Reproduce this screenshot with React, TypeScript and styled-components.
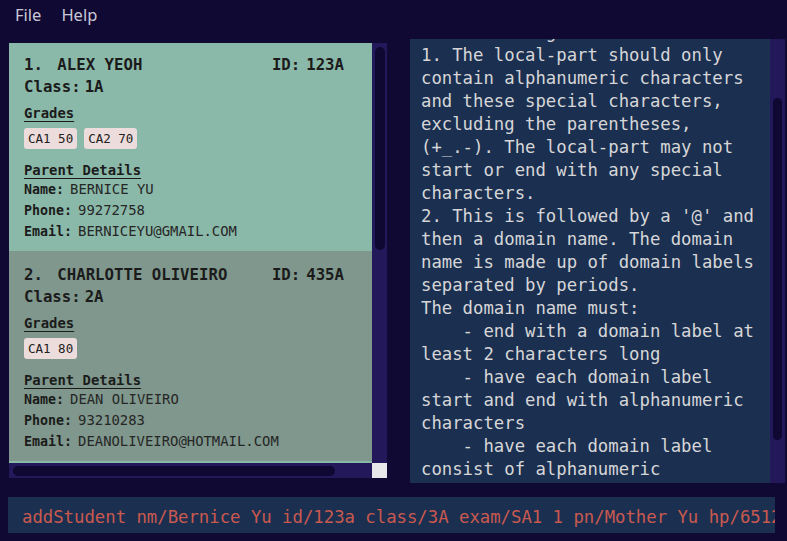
import React from "react";
import styled, { createGlobalStyle } from "styled-components";

const GlobalStyle = createGlobalStyle`
  html, body { margin: 0; padding: 0; background: #100934; }
  #root { width: 787px; height: 541px; overflow: hidden; }
  * { box-sizing: border-box; }
`;

const MONO = `"DejaVu Sans Mono", "Liberation Mono", monospace`;

const Window = styled.div`
  width: 787px;
  height: 541px;
  background: #100934;
  display: flex;
  flex-direction: column;
`;

const MenuBar = styled.div`
  height: 30px;
  display: flex;
  align-items: center;
  gap: 20px;
  padding-left: 15px;
  font-family: "Noto Sans", "Open Sans", sans-serif;
  font-size: 16.5px;
  color: #c9c8d6;
`;

const MenuItem = styled.span`
  line-height: 30px;
`;

const Main = styled.div`
  display: flex;
  padding: 9px 0 0 9px;
  gap: 23px;
`;

const LeftPane = styled.div`
  margin-top: 4px;
  width: 378px;
  display: flex;
  flex-direction: column;
`;

const ListRow = styled.div`
  display: flex;
  height: 420px;
`;

const ListViewport = styled.div`
  width: 363px;
  height: 420px;
  overflow: hidden;
`;

const ListInner = styled.div<{ $offset: number }>`
  margin-top: ${(p) => -p.$offset}px;
`;

const Card = styled.div<{ $odd: boolean }>`
  height: 210px;
  padding: 14px 28px 0 15px;
  background: ${(p) => (p.$odd ? "#8bb9a9" : "#7f978c")};
  color: #1b1b1b;
  font-family: ${MONO};
`;

const CardStub = styled.div`
  height: 10px;
  background: #8bb9a9;
`;

const HeaderRow = styled.div`
  display: flex;
  justify-content: space-between;
  font-size: 15.7px;
  font-weight: bold;
  line-height: 20px;
  height: 20px;
`;

const NameGroup = styled.div`
  display: flex;
  gap: 5px;
  white-space: pre;
`;

const FieldPair = styled.div<{ $gap: number }>`
  display: flex;
  gap: ${(p) => p.$gap}px;
  white-space: pre;
`;

const ClassRow = styled.div`
  margin-top: 2px;
  font-size: 15.7px;
  font-weight: bold;
  line-height: 20px;
  height: 20px;
`;

const SectionTitle = styled.div<{ $top: number }>`
  margin-top: ${(p) => p.$top}px;
  font-size: 13.9px;
  font-weight: bold;
  line-height: 18px;
  height: 18px;
  text-decoration: underline;
  text-underline-offset: 3px;
`;

const Chips = styled.div`
  margin-top: 6px;
  display: flex;
  gap: 7px;
  height: 21px;
`;

const Chip = styled.span`
  background: #ecdcdb;
  border-radius: 3px;
  padding: 0 4px;
  height: 21px;
  line-height: 21px;
  font-size: 12.5px;
  color: #202020;
`;

const DetailRow = styled.div`
  display: flex;
  align-items: baseline;
  gap: 6px;
  line-height: 21px;
  height: 21px;
  white-space: pre;
`;

const DetailLabel = styled.span`
  font-size: 13.3px;
  font-weight: bold;
`;

const DetailValue = styled.span`
  font-size: 13.9px;
  color: #262626;
`;

const VTrack = styled.div<{ $thumbTop: number; $inset: number }>`
  width: 15px;
  background: #23185a;
  padding-top: ${(p) => p.$thumbTop}px;
  padding-left: ${(p) => p.$inset}px;
  flex-shrink: 0;
`;

const VThumb = styled.div<{ $h: number; $w: number }>`
  width: ${(p) => p.$w}px;
  height: ${(p) => p.$h}px;
  border-radius: 5px;
  background: #0f0832;
`;

const HBarRow = styled.div`
  display: flex;
  height: 15px;
`;

const HTrack = styled.div`
  width: 363px;
  background: #23185a;
  padding: 3px 0 0 4px;
`;

const HThumb = styled.div<{ $w: number }>`
  width: ${(p) => p.$w}px;
  height: 10px;
  border-radius: 5px;
  background: #0f0832;
`;

const Corner = styled.div`
  width: 15px;
  background: #e8e7ea;
`;

const RightPane = styled.div`
  width: 375px;
  height: 444px;
  display: flex;
`;

const ResultBox = styled.div`
  width: 360px;
  height: 444px;
  background: #1b3050;
  overflow: hidden;
  padding-left: 11px;
`;

const ResultText = styled.div`
  margin-top: -18px;
  font-family: ${MONO};
  font-size: 17.3px;
  line-height: 23px;
  color: #d6d6d8;
  white-space: pre;
`;

const CommandBox = styled.div`
  margin: 14px 12px 0 8px;
  height: 36px;
  background: #1b3050;
  overflow: hidden;
  padding: 3px 0 0 14px;
  display: flex;
  align-items: center;
  font-family: ${MONO};
  font-size: 17.3px;
  color: #c9594f;
  white-space: pre;
`;

type Student = {
  idx: number;
  name: string;
  id: string;
  cls: string;
  grades: string[];
  parent: string;
  phone: string;
  email: string;
};

const students: Student[] = [
  {
    idx: 1,
    name: "ALEX YEOH",
    id: "123A",
    cls: "1A",
    grades: ["CA1 50", "CA2 70"],
    parent: "BERNICE YU",
    phone: "99272758",
    email: "BERNICEYU@GMAIL.COM",
  },
  {
    idx: 2,
    name: "CHARLOTTE OLIVEIRO",
    id: "435A",
    cls: "2A",
    grades: ["CA1 80"],
    parent: "DEAN OLIVEIRO",
    phone: "93210283",
    email: "DEANOLIVEIRO@HOTMAIL.COM",
  },
];

const resultLines = [
  "the following constraints:",
  "1. The local-part should only",
  "contain alphanumeric characters",
  "and these special characters,",
  "excluding the parentheses,",
  "(+_.-). The local-part may not",
  "start or end with any special",
  "characters.",
  "2. This is followed by a '@' and",
  "then a domain name. The domain",
  "name is made up of domain labels",
  "separated by periods.",
  "The domain name must:",
  "    - end with a domain label at",
  "least 2 characters long",
  "    - have each domain label",
  "start and end with alphanumeric",
  "characters",
  "    - have each domain label",
  "consist of alphanumeric",
];

function StudentCard({ s }: { s: Student }) {
  return (
    <Card $odd={s.idx % 2 === 1}>
      <HeaderRow>
        <NameGroup>
          <span>{s.idx}. </span>
          <span>{s.name}</span>
        </NameGroup>
        <FieldPair $gap={6}>
          <span>ID:</span>
          <span>{s.id}</span>
        </FieldPair>
      </HeaderRow>
      <ClassRow>
        <FieldPair $gap={4}>
          <span>Class:</span>
          <span>{s.cls}</span>
        </FieldPair>
      </ClassRow>
      <SectionTitle $top={7}>Grades</SectionTitle>
      <Chips>
        {s.grades.map((g) => (
          <Chip key={g}>{g}</Chip>
        ))}
      </Chips>
      <SectionTitle $top={12}>Parent Details</SectionTitle>
      <DetailRow>
        <DetailLabel>Name:</DetailLabel>
        <DetailValue>{s.parent}</DetailValue>
      </DetailRow>
      <DetailRow>
        <DetailLabel>Phone:</DetailLabel>
        <DetailValue>{s.phone}</DetailValue>
      </DetailRow>
      <DetailRow>
        <DetailLabel>Email:</DetailLabel>
        <DetailValue>{s.email}</DetailValue>
      </DetailRow>
    </Card>
  );
}

export default function App() {
  return (
    <>
      <GlobalStyle />
      <Window>
        <MenuBar>
          <MenuItem>File</MenuItem>
          <MenuItem>Help</MenuItem>
        </MenuBar>
        <Main>
          <LeftPane>
            <ListRow>
              <ListViewport>
                <ListInner $offset={2}>
                  {students.map((s) => (
                    <StudentCard key={s.idx} s={s} />
                  ))}
                  <CardStub />
                </ListInner>
              </ListViewport>
              <VTrack $thumbTop={4} $inset={3}>
                <VThumb $h={203} $w={10} />
              </VTrack>
            </ListRow>
            <HBarRow>
              <HTrack>
                <HThumb $w={322} />
              </HTrack>
              <Corner />
            </HBarRow>
          </LeftPane>
          <RightPane>
            <ResultBox>
              <ResultText>{resultLines.join("\n")}</ResultText>
            </ResultBox>
            <VTrack $thumbTop={59} $inset={3}>
              <VThumb $h={342} $w={9} />
            </VTrack>
          </RightPane>
        </Main>
        <CommandBox>
          addStudent nm/Bernice Yu id/123a class/3A exam/SA1 1 pn/Mother Yu hp/65123456
        </CommandBox>
      </Window>
    </>
  );
}
